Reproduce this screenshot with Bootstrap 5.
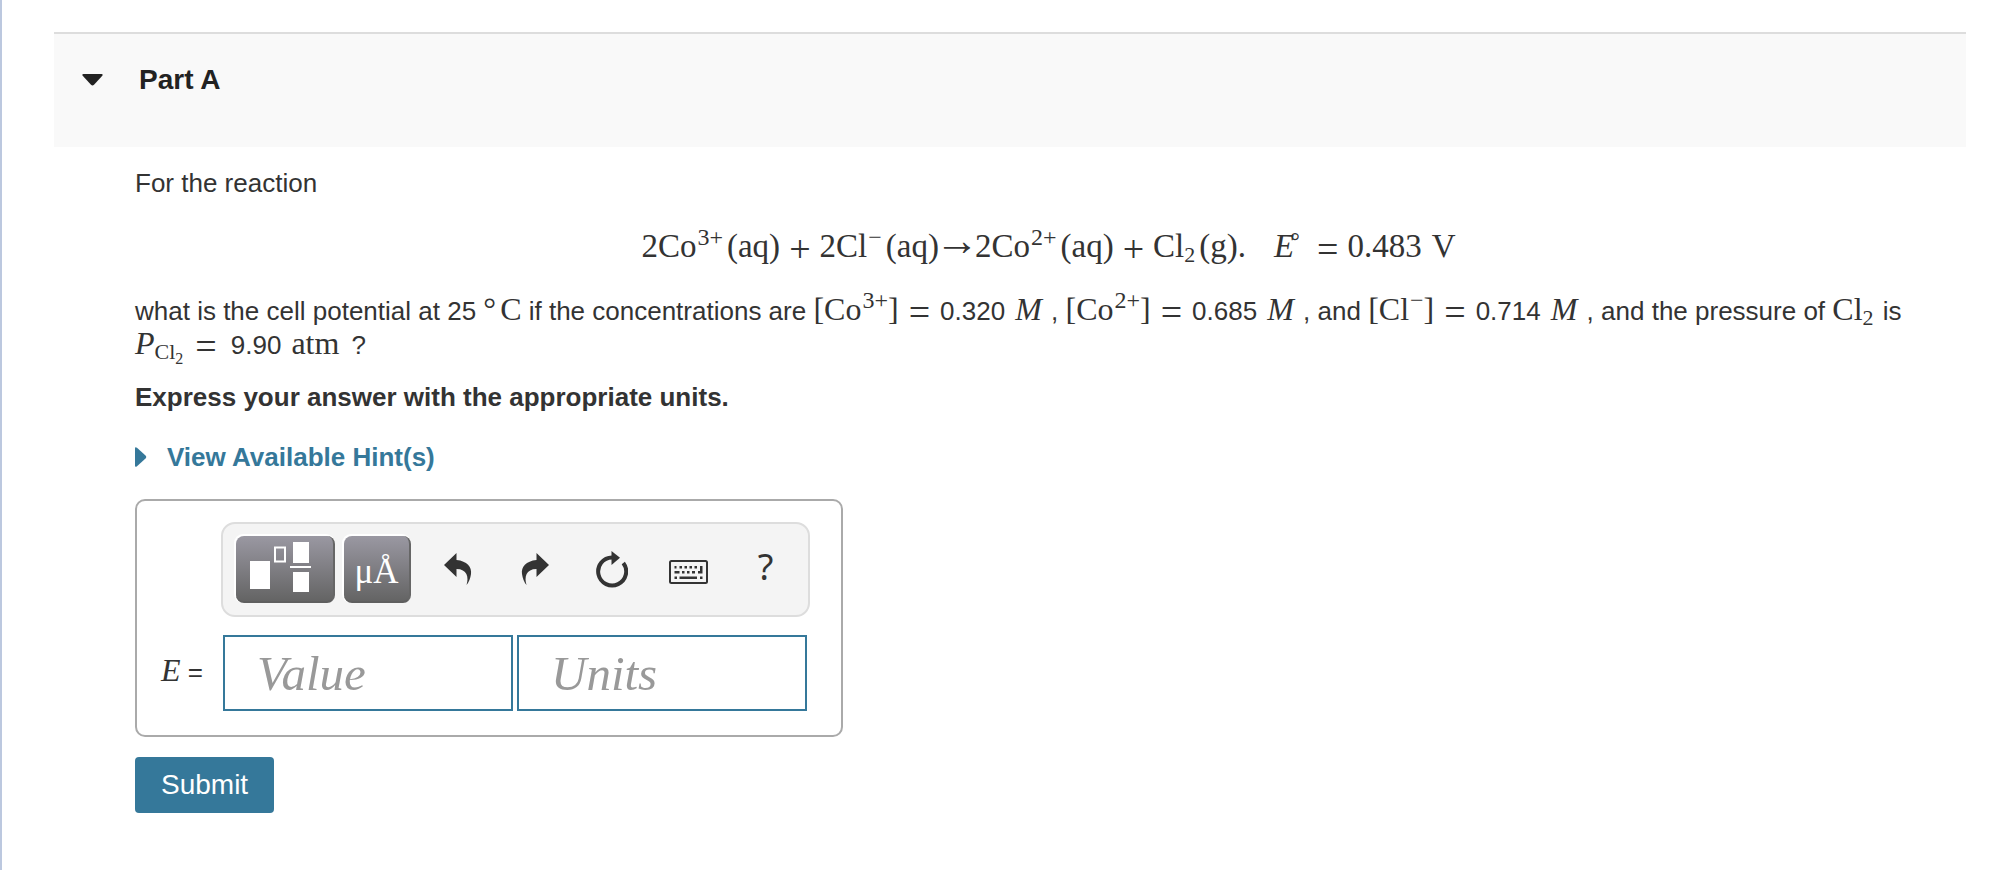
<!DOCTYPE html>
<html lang="en">
<head>
<meta charset="utf-8">
<meta name="viewport" content="width=device-width, initial-scale=1">
<title>Part A</title>
<link rel="stylesheet" href="https://cdn.jsdelivr.net/npm/bootstrap@5.3.0/dist/css/bootstrap.min.css">
<style>
body{font-family:"Liberation Sans",Arial,sans-serif;font-size:26px;line-height:34px;color:#333}
.page-frame{border-left:2px solid #bcc8df;min-height:100vh;padding:32px 44px 40px 52px}
.part-header{background:#f9f9f9;border-top:2px solid #ddd;height:115px;padding:28px 28px 0}
.part-toggle{color:#222;font-size:28px;line-height:36px;font-weight:700;gap:36px}
.part-body{padding:19px 4px 0 81px}
.tex{font-family:"Liberation Serif","Times New Roman",serif;font-size:32px;line-height:30px;white-space:nowrap}
.tex sup,.tex sub{position:static;font-size:24px;line-height:0}
.tex sup{vertical-align:12px;margin-left:1px}
.tex sub{vertical-align:-5px;font-size:22px}
.tex sub sub{vertical-align:-5px;font-size:16px}
.tex .degree{font-size:24px;vertical-align:8px;margin-left:-4px}
.op{font-size:38px;line-height:0;margin:0 10px;vertical-align:-5px}
.arrow{font-size:44px;line-height:0;margin:0 -4px;vertical-align:2px}
.num{font-family:"Liberation Sans",Arial,sans-serif;font-size:26px}
.g1{margin-left:4px}.g2{margin-left:10px}.g3{margin-left:28px}.r1{margin-right:2px}
.equation{font-size:33px;margin:31px 0 33px}
.equation .op{margin:0 9px}
.question{margin-bottom:18px}
.hint-link{color:#35789a;gap:20px;margin-top:26px;margin-bottom:25px}
.answer-box{border:2px solid #aaa;border-radius:10px;max-width:708px;padding:21px 31px 24px 20px}
.label-col{width:64px}
.toolbar-box{background:#f4f4f4;border:2px solid #ddd;border-radius:14px;height:95px;padding:0 4px 0 13px}
.tile{border:0;padding:0;height:67px;border-radius:8px;background:linear-gradient(#9a98a2,#646464);box-shadow:-1px -1px 0 1px #fff;border-right:2px solid #666;border-bottom:2px solid #5f5f5f;color:#fff}
.tile-wide{width:99px;margin-right:9px}
.tile-unit{width:67px;font-family:"Liberation Serif",serif;font-size:35px;padding-top:6px}
.tool{border:0;padding:0;background:none;color:#333;width:77px;height:67px}
.help-mark{font-family:"Noto Sans",sans-serif;font-size:36px;padding-bottom:6px}
.fields{margin:2px 3px 0 2px}
.answer-field{border:2px solid #35789a;border-radius:0;height:76px;padding:0 32px;font:italic 49px "Liberation Serif",serif;color:#333}
.answer-field::placeholder{color:#999;opacity:1}
.submit-btn{background:#35789a;color:#fff;border:0;border-radius:4px;font-size:28px;line-height:36px;padding:10px 26px;margin-top:20px}
.submit-btn:hover{background:#2b6380;color:#fff}
</style>
</head>
<body>
<main class="page-frame">
  <header class="part-header">
    <button class="part-toggle btn p-0 border-0 rounded-0 d-flex align-items-center" type="button" aria-expanded="true">
      <svg width="21" height="12" viewBox="0 0 21 12" aria-hidden="true"><path d="M1.500 0h18q1.800.2.8 1.700L12 10.800q-1.500 1.500-3 0L.7 1.700Q-.3.2 1.500 0Z" fill="#222"/></svg>
      <span>Part A</span>
    </button>
  </header>
  <section class="part-body">
    <p class="m-0">For the reaction</p>
    <div class="equation tex text-center">2Co<sup>3+</sup><span class="g1">(aq)</span><span class="op">+</span>2Cl<sup>−</sup><span class="g1">(aq)</span><span class="arrow">→</span>2Co<sup>2+</sup><span class="g1">(aq)</span><span class="op">+</span>Cl<sub>2</sub><span class="g1">(g).</span><i class="g3">E</i><sup class="degree">°</sup> <span class="op">=</span>0.483<span class="g2">V</span></div>
    <p class="question">what is the cell potential at 25 <span class="tex">°<span class="g1">C</span></span> if the concentrations are <span class="tex">[Co<sup>3+</sup>]<span class="op">=</span><span class="num">0.320</span><i class="g2 r1">M</i></span> , <span class="tex">[Co<sup>2+</sup>]<span class="op">=</span><span class="num">0.685</span><i class="g2 r1">M</i></span> , and <span class="tex">[Cl<sup>−</sup>]<span class="op">=</span><span class="num">0.714</span><i class="g2 r1">M</i></span> , and the pressure of <span class="tex r1">Cl<sub>2</sub></span> is <span class="tex"><i>P</i><sub class="r1">Cl<sub>2</sub></sub><span class="op">=</span><span class="num g1">9.90</span><span class="g2">atm</span> <span class="num g1">?</span></span></p>
    <p class="fw-bold m-0">Express your answer with the appropriate units.</p>
    <a class="hint-link fw-bold text-decoration-none d-flex align-items-center" href="#hints">
      <svg width="12" height="20" viewBox="0 0 12 20" aria-hidden="true"><path d="M0 1.500Q0-.7 2 .8L10.500 8.500Q12 10 10.500 11.500L2 19.200Q0 20.700 0 18.500Z" fill="#35789a"/></svg>
      <span>View Available Hint(s)</span>
    </a>
    <form>
      <div class="answer-box">
        <div class="d-flex">
          <div class="label-col flex-shrink-0"></div>
          <div class="toolbar-box flex-grow-1 d-flex align-items-center" role="toolbar" aria-label="Math tools">
            <button class="tile tile-wide" type="button" aria-label="Templates">
              <svg class="d-block" width="97" height="65" viewBox="0 0 97 65" aria-hidden="true"><g fill="#fff"><path d="M14 25h20v28H14zM57 6h16v21H57zM54 30h21v2H54zM57 36h16v20H57z"/></g><path d="M39 11.500h10v14H39z" fill="none" stroke="#fff" stroke-width="2"/></svg>
            </button>
            <button class="tile tile-unit" type="button" aria-label="Units symbols">μÅ</button>
            <button class="tool ms-2" type="button" aria-label="Undo"><svg width="28" height="35" viewBox="0 0 28 35" aria-hidden="true"><path d="M0 12 12.500 0v7C23 8 28 14 27 21Q26 28 22.500 32C25 24 23 16 12.500 16v8Z" fill="currentColor"/></svg></button>
            <button class="tool" type="button" aria-label="Redo"><svg width="28" height="35" viewBox="0 0 28 35" aria-hidden="true"><path d="M28 12 15.500 0v7C5 8 0 14 1 21Q2 28 5.500 32C3 24 5 16 15.500 16v8Z" fill="currentColor"/></svg></button>
            <button class="tool" type="button" aria-label="Reset"><svg width="32" height="37" viewBox="0 0 32 37" aria-hidden="true"><path d="M16 6.500A14 14 0 1 0 27.300 12" fill="none" stroke="currentColor" stroke-width="4"/><path d="M15.500 0 24 6.800 15.500 14Z" fill="currentColor"/></svg></button>
            <button class="tool" type="button" aria-label="Keyboard"><svg width="39" height="24" viewBox="0 0 39 24" aria-hidden="true"><rect x="1" y="1" width="37" height="22" rx="1.500" fill="none" stroke="currentColor" stroke-width="2"/><path d="M5.500 6h2v2.500h-2zM10.500 6h2.500v2.500h-2.500zM15.500 6h2.500v2.500h-2.500zM20.500 6h2.500v2.500h-2.500zM25.500 6h2.500v2.500h-2.500zM31 6h2.500v7.500H29V11h2zM5.500 11h5v2.500h-5zM13 11h2.500v2.500H13zM18 11h2.500v2.500H18zM23 11h3v2.500h-3zM5.500 16.500h2.500V19H5.500zM10.500 16.500h17.500V19H10.500zM31 16.500h2.500V19H31z" fill="currentColor"/></svg></button>
            <button class="tool help-mark" type="button" aria-label="Help">?</button>
          </div>
        </div>
        <div class="d-flex align-items-center mt-3">
          <label class="label-col flex-shrink-0" for="value"><span class="tex"><i class="g1">E</i></span> =</label>
          <div class="fields d-flex flex-grow-1 gap-1">
            <input class="answer-field form-control" id="value" type="text" placeholder="Value">
            <input class="answer-field form-control" id="units" type="text" placeholder="Units" aria-label="Units">
          </div>
        </div>
      </div>
      <button class="submit-btn btn" type="submit">Submit</button>
    </form>
  </section>
</main>
<script src="https://cdn.jsdelivr.net/npm/bootstrap@5.3.0/dist/js/bootstrap.bundle.min.js"></script>
</body>
</html>
